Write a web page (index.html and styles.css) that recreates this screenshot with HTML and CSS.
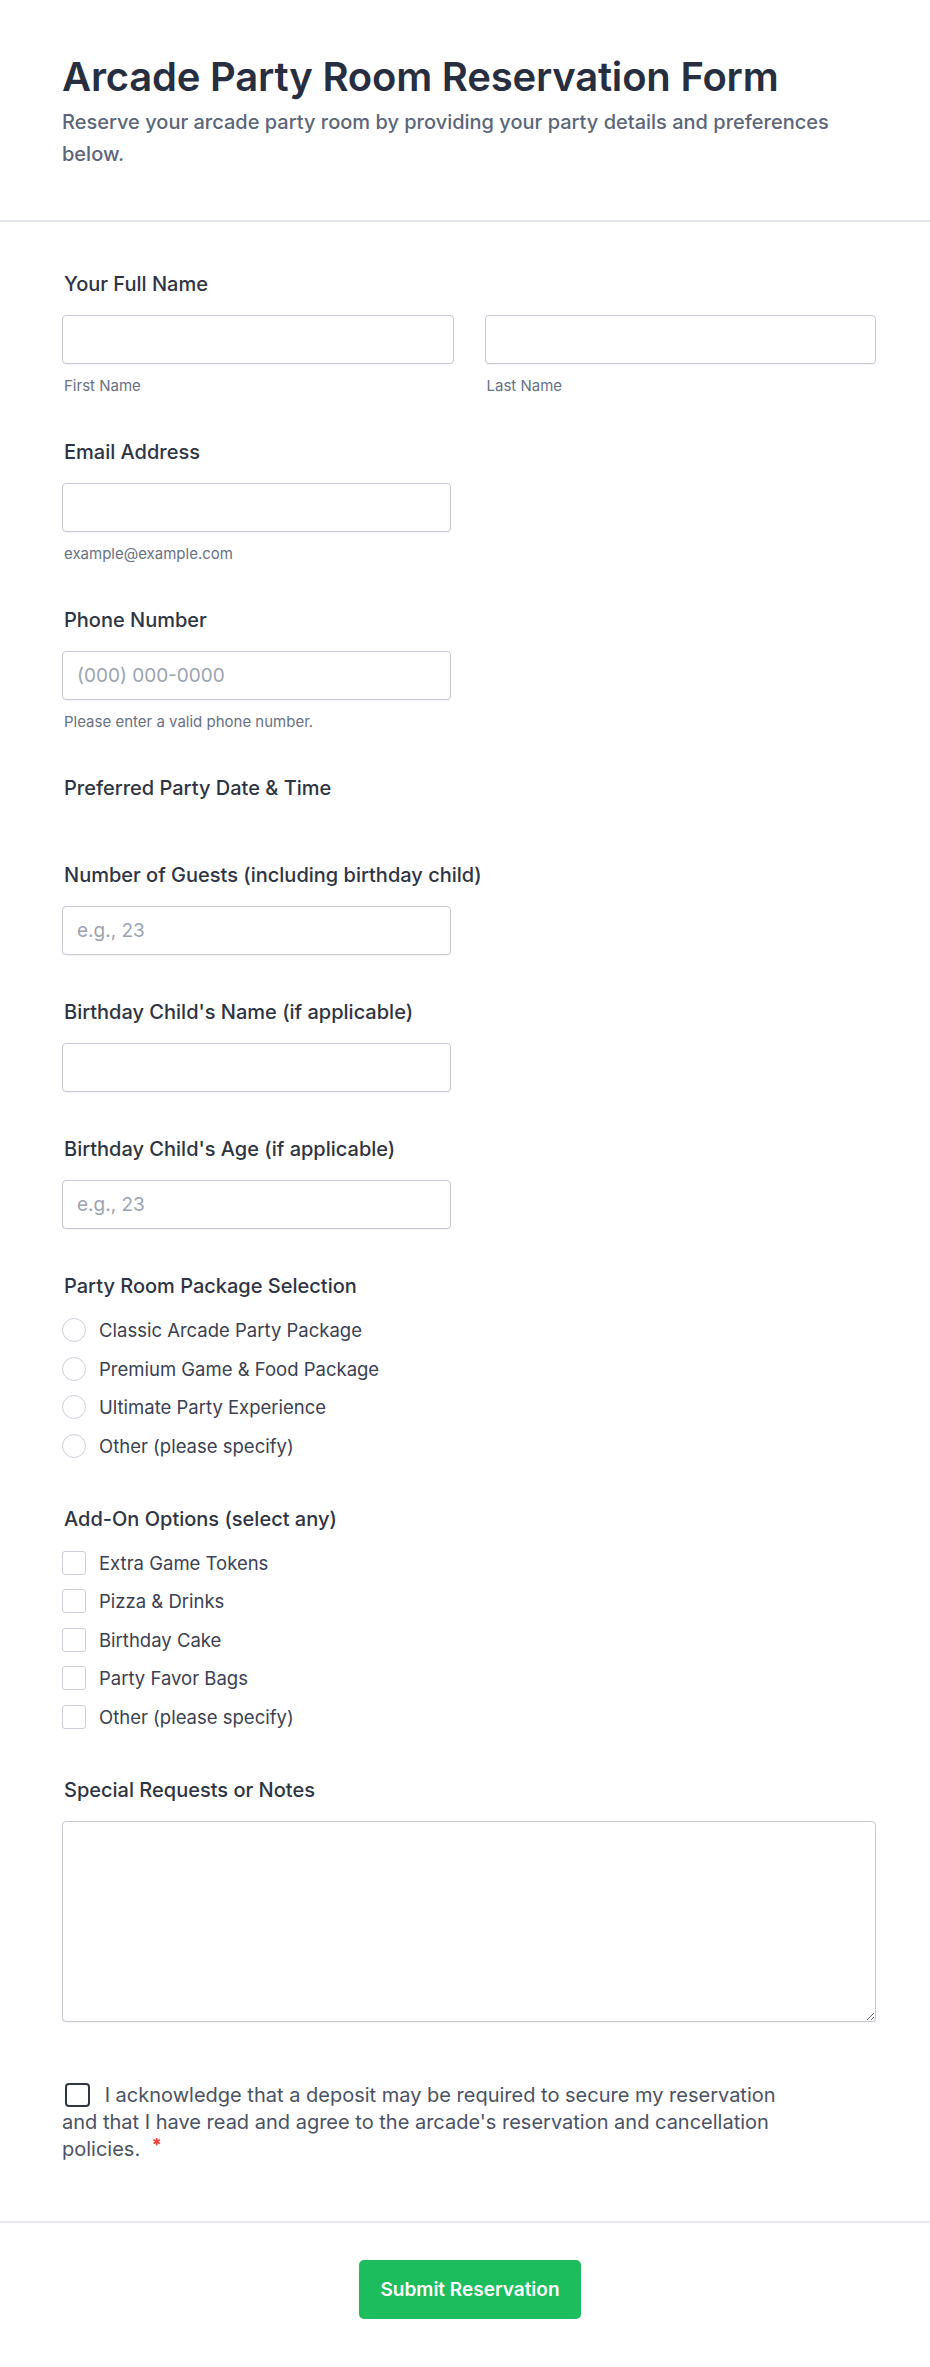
FILE: index.html
```html
<!DOCTYPE html>
<html lang="en">
<head>
  <meta charset="UTF-8">
  <title>Arcade Party Room Reservation Form</title>
  <link rel="stylesheet" href="styles.css">
</head>
<body>

<div class="page">
  <header class="form-header">
    <h1>Arcade Party Room Reservation Form</h1>
    <p>Reserve your arcade party room by providing your party details and preferences below.</p>
  </header>

  <form class="form-body">
    <div class="field">
      <label class="field-label">Your Full Name</label>
      <div class="name-row">
        <div>
          <input type="text" class="text-input">
          <span class="sub-label">First Name</span>
        </div>
        <div>
          <input type="text" class="text-input">
          <span class="sub-label">Last Name</span>
        </div>
      </div>
    </div>

    <div class="field">
      <label class="field-label">Email Address</label>
      <input type="email" class="text-input half">
      <span class="sub-label">example@example.com</span>
    </div>

    <div class="field">
      <label class="field-label">Phone Number</label>
      <input type="tel" class="text-input half" placeholder="(000) 000-0000">
      <span class="sub-label">Please enter a valid phone number.</span>
    </div>

    <div class="field">
      <label class="field-label">Preferred Party Date &amp; Time</label>
      <div class="date-slot"></div>
    </div>

    <div class="field">
      <label class="field-label">Number of Guests (including birthday child)</label>
      <input type="text" class="text-input half" placeholder="e.g., 23">
    </div>

    <div class="field">
      <label class="field-label">Birthday Child's Name (if applicable)</label>
      <input type="text" class="text-input half">
    </div>

    <div class="field">
      <label class="field-label">Birthday Child's Age (if applicable)</label>
      <input type="text" class="text-input half" placeholder="e.g., 23">
    </div>

    <div class="field options-field">
      <label class="field-label">Party Room Package Selection</label>
      <div class="options">
        <label class="option"><input type="radio" name="package"><span>Classic Arcade Party Package</span></label>
        <label class="option"><input type="radio" name="package"><span>Premium Game &amp; Food Package</span></label>
        <label class="option"><input type="radio" name="package"><span>Ultimate Party Experience</span></label>
        <label class="option"><input type="radio" name="package"><span>Other (please specify)</span></label>
      </div>
    </div>

    <div class="field options-field">
      <label class="field-label">Add-On Options (select any)</label>
      <div class="options">
        <label class="option"><input type="checkbox"><span>Extra Game Tokens</span></label>
        <label class="option"><input type="checkbox"><span>Pizza &amp; Drinks</span></label>
        <label class="option"><input type="checkbox"><span>Birthday Cake</span></label>
        <label class="option"><input type="checkbox"><span>Party Favor Bags</span></label>
        <label class="option"><input type="checkbox"><span>Other (please specify)</span></label>
      </div>
    </div>

    <div class="field">
      <label class="field-label">Special Requests or Notes</label>
      <textarea class="text-area"></textarea>
    </div>

    <div class="agree">
      <label><input type="checkbox" class="agree-box"> I acknowledge that a deposit may be required to secure my reservation and that I have read and agree to the arcade's reservation and cancellation policies. <span class="required">*</span></label>
    </div>
  </form>

  <div class="form-footer">
    <button type="button" class="submit-btn">Submit Reservation</button>
  </div>
</div>

</body>
</html>
```

FILE: styles.css
```css
body {
  margin: 0;
  padding: 0;
  background: #fff;
  font-family: Inter, "Noto Sans", sans-serif;
  color: #2e3443;
}

.page {
  width: 930px;
}

.form-header {
  padding: 53px 54px 50px 62px;
  border-bottom: 2px solid #e3e6ec;
}

.form-header h1 {
  margin: 0;
  font-size: 40px;
  line-height: 48px;
  font-weight: 600;
  color: #272e3f;
  letter-spacing: -0.2px;
}

.form-header p {
  margin: 5px 0 0;
  font-size: 20px;
  line-height: 32px;
  font-weight: 500;
  color: #5c6679;
}

.form-body {
  padding: 49px 54px 58px 62px;
}

.field {
  display: flex;
  flex-direction: column;
  margin-bottom: 44px;
}

.options-field {
  margin-bottom: 47px;
}

.field-label {
  display: block;
  font-size: 20px;
  line-height: 27px;
  font-weight: 500;
  color: #2e3443;
  margin-bottom: 17px;
  padding-left: 2px;
}

.name-row {
  display: grid;
  grid-template-columns: 1fr 1fr;
  gap: 31px;
}

.text-input {
  display: block;
  width: 100%;
  height: 49px;
  box-sizing: border-box;
  border: 1px solid #c4c9d4;
  border-radius: 4px;
  padding: 0 14px;
  font-family: inherit;
  font-size: 19px;
  color: #2e3443;
  background: #fff;
  box-shadow: 0 1px 1px rgba(30, 40, 60, 0.05);
}

.text-input.half {
  width: 389px;
}

.text-input::placeholder {
  color: #9aa3b2;
}

.sub-label {
  display: block;
  margin-top: 12px;
  font-size: 15px;
  line-height: 19px;
  color: #687184;
  padding-left: 2px;
}

.date-slot {
  height: 0;
  margin-top: -1px;
}

.options {
  display: flex;
  flex-direction: column;
  gap: 12.5px;
}

.option {
  display: flex;
  align-items: center;
  gap: 13px;
  height: 26px;
  font-size: 18.5px;
  line-height: 26px;
  color: #3a4152;
}

.option input {
  appearance: none;
  -webkit-appearance: none;
  margin: 0;
  width: 24px;
  height: 24px;
  border: 1.5px solid #cbd0da;
  background: #fff;
  flex-shrink: 0;
}

.option input[type="radio"] {
  border-radius: 50%;
}

.option input[type="checkbox"] {
  border-radius: 3px;
}

.text-area {
  display: block;
  width: 100%;
  height: 201px;
  box-sizing: border-box;
  border: 1px solid #c4c9d4;
  border-radius: 4px;
  padding: 12px 16px;
  font-family: inherit;
  font-size: 18px;
  box-shadow: 0 1px 1px rgba(30, 40, 60, 0.05);
}

.agree {
  padding-top: 16px;
  max-width: 730px;
  font-size: 20px;
  line-height: 27px;
  color: #4a5264;
}

.agree-box {
  appearance: none;
  -webkit-appearance: none;
  width: 25px;
  height: 24px;
  margin: 0 9px 0 3px;
  border: 2px solid #2f3542;
  border-radius: 4px;
  vertical-align: -5px;
}

.required {
  color: #ef3b36;
  font-size: 18px;
  font-weight: 700;
  line-height: 0;
  vertical-align: 5px;
  margin-left: 6px;
}

.form-footer {
  border-top: 2px solid #e6e8ee;
  padding: 37px 0 50px;
  display: flex;
  justify-content: center;
}

.submit-btn {
  height: 59px;
  padding: 0 21px;
  margin-left: 10px;
  border: none;
  border-radius: 5px;
  background: #1cbd5c;
  color: #fff;
  font-family: inherit;
  font-size: 19px;
  font-weight: 600;
  cursor: pointer;
}
```
